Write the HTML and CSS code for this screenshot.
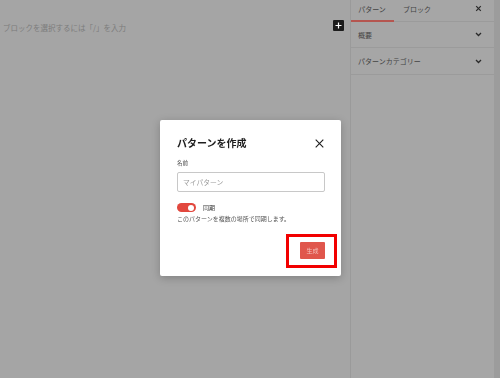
FILE: index.html
```html
<!DOCTYPE html>
<html lang="ja">
<head>
<meta charset="UTF-8" />
<title>パターンを作成</title>
<link rel="stylesheet" href="styles.css">
</head>
<body>
<div class="layout">
  <main class="editor">
    <div class="block-row">
      <span class="placeholder">ブロックを選択するには「/」を入力</span>
      <button class="add-btn" aria-label="ブロックを追加">
        <svg width="7" height="7" viewBox="0 0 7 7"><path d="M3.5 0.5v6M0.5 3.5h6" stroke="#fff" stroke-width="1.2"/></svg>
      </button>
    </div>
  </main>
  <aside class="sidebar">
    <div class="tabs">
      <button class="tab active">パターン</button>
      <button class="tab">ブロック</button>
      <button class="tab-close" aria-label="閉じる">
        <svg width="7" height="7" viewBox="0 0 7 7"><path d="M1.2 1.2l4.6 4.6M5.8 1.2l-4.6 4.6" stroke="#2a2a2a" stroke-width="1.2"/></svg>
      </button>
    </div>
    <div class="panel">
      <span>概要</span>
      <svg class="chevron" width="7" height="5" viewBox="0 0 7 5"><path d="M1 1l2.5 2.5L6 1" fill="none" stroke="#2a2a2a" stroke-width="1.3"/></svg>
    </div>
    <div class="panel">
      <span>パターンカテゴリー</span>
      <svg class="chevron" width="7" height="5" viewBox="0 0 7 5"><path d="M1 1l2.5 2.5L6 1" fill="none" stroke="#2a2a2a" stroke-width="1.3"/></svg>
    </div>
  </aside>
  <div class="scrollbar"></div>
</div>

<!-- Create pattern modal -->
<div class="overlay">
  <div class="modal">
    <div class="modal-head">
      <h1>パターンを作成</h1>
      <button class="modal-close" aria-label="閉じる">
        <svg width="9" height="9" viewBox="0 0 9 9"><path d="M0.7 0.7l7.6 7.6M8.3 0.7l-7.6 7.6" stroke="#1e1e1e" stroke-width="1.1"/></svg>
      </button>
    </div>
    <label class="field-label" for="patternName">名前</label>
    <input id="patternName" class="field-input" placeholder="マイパターン" />
    <div class="sync-row">
      <span class="toggle"><span class="knob"></span></span>
      <span class="sync-label">同期</span>
    </div>
    <p class="help">このパターンを複数の場所で同期します。</p>
    <div class="modal-foot">
      <div class="btn-wrap">
        <button class="create-btn">生成</button>
      </div>
    </div>
  </div>
</div>
</body>
</html>
```

FILE: styles.css
```css
* { box-sizing: border-box; }
body {
  margin: 0;
  font-family: "Noto Sans CJK JP", "Noto Sans", sans-serif;
  background: #a5a5a5;
  color: #333;
  width: 500px;
  height: 378px;
  overflow: hidden;
}
button {
  font-family: inherit;
  border: none;
  background: none;
  padding: 0;
  cursor: pointer;
}
.layout {
  display: flex;
  height: 378px;
}
.editor {
  flex: 1;
  padding: 18px 6px 0 3px;
}
.block-row {
  display: flex;
  align-items: center;
}
.placeholder {
  font-size: 7.5px;
  line-height: 11px;
  color: #7c7c7c;
  margin-top: 4px;
}
.add-btn {
  margin-left: auto;
  width: 11px;
  height: 11px;
  background: #1c1c1c;
  border-radius: 1px;
  display: flex;
  align-items: center;
  justify-content: center;
}
.sidebar {
  width: 144px;
  background: #a6a6a6;
  border-left: 1px solid #9a9a9a;
}
.tabs {
  display: flex;
  align-items: stretch;
  height: 22px;
  border-bottom: 1px solid #9b9b9b;
}
.tab {
  font-size: 7px;
  color: #444;
  padding: 0 8px 2px 8px;
  border-bottom: 2px solid transparent;
  margin-bottom: -1px;
}
.tab.active {
  width: 43px;
  padding-left: 7px;
  border-bottom-color: #b55650;
}
.tab + .tab {
  padding-left: 9px;
}
.tab-close {
  margin-left: auto;
  margin-right: 12px;
  display: flex;
  align-items: center;
  padding-bottom: 4px;
}
.panel {
  display: flex;
  align-items: center;
  justify-content: space-between;
  height: 27px;
  padding: 0 12px 0 7px;
  border-bottom: 1px solid #9b9b9b;
  font-size: 7px;
  color: #444;
}
.panel:nth-child(2) { height: 26px; }
.scrollbar {
  width: 6px;
  background: #9c9c9c;
}
/* Modal */
.overlay {
  position: fixed;
  inset: 0;
  display: flex;
  justify-content: center;
  align-items: flex-start;
  padding-top: 120px;
}
.modal {
  width: 181px;
  margin-left: 1px;
  background: #fff;
  border-radius: 2px;
  box-shadow: 0 2px 8px rgba(0,0,0,0.22);
  padding: 16px 16px 9px 17px;
  display: flex;
  flex-direction: column;
}
.modal-head {
  display: flex;
  align-items: center;
  justify-content: space-between;
  height: 14px;
}
.modal-head h1 {
  margin: 0;
  font-size: 10px;
  line-height: 14px;
  font-weight: 700;
  color: #1e1e1e;
}
.modal-close {
  display: flex;
  margin-right: 1px;
}
.field-label {
  margin-top: 9px;
  font-size: 5.5px;
  line-height: 8px;
  color: #444;
}
.field-input {
  margin-top: 5px;
  width: 100%;
  height: 20px;
  border: 1px solid #c8c8c8;
  border-radius: 2px;
  padding: 0 5px;
  font-family: inherit;
  font-size: 6.8px;
  outline: none;
}
.field-input::placeholder { color: #9a9a9a; }
.sync-row {
  display: flex;
  align-items: center;
  gap: 7px;
  margin-top: 11px;
}
.toggle {
  width: 19px;
  height: 9px;
  border-radius: 5px;
  background: #e2483e;
  display: flex;
  align-items: center;
  justify-content: flex-end;
  padding-right: 2px;
}
.knob {
  width: 6px;
  height: 6px;
  border-radius: 50%;
  background: #fff;
}
.sync-label {
  font-size: 6px;
  color: #333;
}
.help {
  margin: 3px 0 0;
  font-size: 6px;
  line-height: 8px;
  color: #555;
}
.modal-foot {
  display: flex;
  justify-content: flex-end;
  margin-top: 11px;
  padding: 8px 12px 8px 0;
  margin-right: -12px;
}
.btn-wrap {
  position: relative;
  display: flex;
}
.btn-wrap::after {
  content: "";
  position: absolute;
  inset: -8px -12px -9px -14px;
  border: 3px solid #f20000;
  pointer-events: none;
}
.create-btn {
  width: 25px;
  height: 17px;
  background: #e0564c;
  color: #f4c2bd;
  font-size: 6px;
  border-radius: 1px;
}
```
